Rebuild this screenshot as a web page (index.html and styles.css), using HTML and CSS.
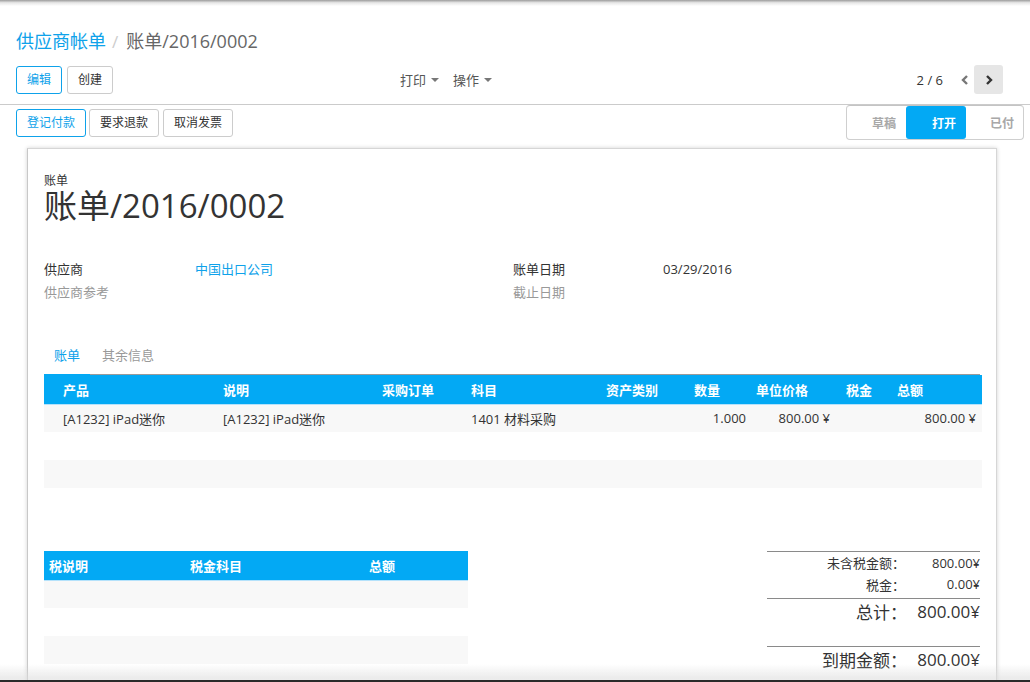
FILE: index.html
```html
<!DOCTYPE html>
<html lang="zh-CN">
<head>
<meta charset="utf-8">
<title>账单/2016/0002</title>
<link rel="stylesheet" href="styles.css">
</head>
<body>
<div class="app">
  <div class="top-shade"></div>
  <div class="control-panel">
    <ol class="breadcrumb">
      <li class="crumb-link">供应商帐单</li>
      <li class="crumb-sep">/</li>
      <li class="crumb-active">账单/2016/0002</li>
    </ol>
    <div class="cp-row">
      <div class="cp-buttons">
        <button class="btn btn-primary">编辑</button>
        <button class="btn">创建</button>
      </div>
      <div class="cp-sidebar">
        <span class="dd">打印<span class="caret"></span></span>
        <span class="dd">操作<span class="caret"></span></span>
      </div>
      <div class="cp-pager">
        <span class="pager-value">2 / 6</span>
        <button class="pager-btn pager-prev"><svg width="10" height="12" viewBox="0 0 10 12"><path d="M7 2 L3 6 L7 10" fill="none" stroke="#777" stroke-width="2.4"/></svg></button>
        <button class="pager-btn pager-next"><svg width="10" height="12" viewBox="0 0 10 12"><path d="M3 2 L7 6 L3 10" fill="none" stroke="#333" stroke-width="2.4"/></svg></button>
      </div>
    </div>
  </div>

  <div class="form-header">
    <div class="header-buttons">
      <button class="btn btn-primary">登记付款</button>
      <button class="btn">要求退款</button>
      <button class="btn">取消发票</button>
    </div>
    <div class="statusbar">
      <span class="status status-first">草稿</span>
      <span class="status status-current">打开</span>
      <span class="status status-last">已付</span>
    </div>
  </div>

  <div class="sheet">
    <div class="title-label">账单</div>
    <h1 class="title">账单/2016/0002</h1>

    <div class="fields">
      <div class="f-label">供应商</div>
      <div class="f-value f-link">中国出口公司</div>
      <div class="f-label">账单日期</div>
      <div class="f-value">03/29/2016</div>
      <div class="f-label f-empty">供应商参考</div>
      <div class="f-value"></div>
      <div class="f-label f-empty">截止日期</div>
      <div class="f-value"></div>
    </div>

    <ul class="tabs">
      <li class="tab tab-active">账单</li>
      <li class="tab">其余信息</li>
    </ul>

    <table class="lines">
      <colgroup>
        <col class="c1"><col class="c2"><col class="c3"><col class="c4"><col class="c5"><col class="c6"><col class="c7"><col class="c8"><col class="c9">
      </colgroup>
      <thead>
        <tr>
          <th class="first">产品</th><th>说明</th><th>采购订单</th><th>科目</th><th>资产类别</th><th>数量</th><th>单位价格</th><th>税金</th><th>总额</th>
        </tr>
      </thead>
      <tbody>
        <tr class="odd">
          <td class="first">[A1232] iPad迷你</td><td>[A1232] iPad迷你</td><td></td><td>1401 材料采购</td><td></td>
          <td class="num n-qty">1.000</td><td class="num n-price">800.00 ¥</td><td></td><td class="num n-total">800.00 ¥</td>
        </tr>
        <tr class="even"><td colspan="9"></td></tr>
        <tr class="odd"><td colspan="9"></td></tr>
      </tbody>
    </table>

    <div class="bottom">
      <table class="taxes">
        <colgroup><col class="t1"><col class="t2"><col class="t3"></colgroup>
        <thead>
          <tr><th>税说明</th><th>税金科目</th><th>总额</th></tr>
        </thead>
        <tbody>
          <tr class="odd"><td colspan="3"></td></tr>
          <tr class="even"><td colspan="3"></td></tr>
          <tr class="odd"><td colspan="3"></td></tr>
        </tbody>
      </table>

      <div class="totals">
        <div class="tot-row tot-small tot-first"><span class="tot-label">未含税金额：</span><span class="tot-value">800.00¥</span></div>
        <div class="tot-row tot-small"><span class="tot-label">税金：</span><span class="tot-value">0.00¥</span></div>
        <div class="tot-row tot-big tot-sep"><span class="tot-label">总计：</span><span class="tot-value">800.00¥</span></div>
        <div class="tot-gap"></div>
        <div class="tot-row tot-big tot-sep tot-due"><span class="tot-label">到期金额：</span><span class="tot-value">800.00¥</span></div>
      </div>
    </div>
  </div>
</div>
<div class="window-bottom"></div>
</body>
</html>
```

FILE: styles.css
```css
* { box-sizing: border-box; }

html, body {
  margin: 0;
  padding: 0;
  height: 100%;
  overflow: hidden;
  background: #fff;
}

body {
  font-family: "Open Sans", "Noto Sans CJK SC", sans-serif;
  font-size: 13px;
  color: #333;
}

.app {
  width: 1030px;
}

.top-shade {
  height: 6px;
  background: linear-gradient(#9c9c9c, #e6e6e6 45%, #fff);
}

/* control panel */
.control-panel {
  padding: 23px 27px 11px 16px;
  border-bottom: 1px solid #cbcbcb;
}

.breadcrumb {
  list-style: none;
  margin: 0;
  padding: 0;
  display: flex;
  align-items: baseline;
  font-size: 18px;
  line-height: 24px;
}

.crumb-link { color: #0ea2ea; }
.crumb-sep { color: #ccc; padding: 0 8px 0 6px; font-size: 17px; }
.crumb-active { color: #666; }

.cp-row {
  margin-top: 11px;
  display: grid;
  grid-template-columns: 384px 1fr auto;
  align-items: center;
  height: 28px;
}

.cp-buttons { display: flex; gap: 5px; }

.btn {
  font-family: inherit;
  font-size: 12px;
  height: 28px;
  padding: 0 10px;
  background: #fff;
  color: #333;
  border: 1px solid #ccc;
  border-radius: 3px;
  line-height: 26px;
}

.btn-primary {
  border-color: #0ea2ea;
  color: #0ea2ea;
}

.cp-sidebar {
  display: flex;
  gap: 14px;
  color: #555;
  font-size: 13px;
}

.dd { display: inline-flex; align-items: center; }

.caret {
  display: inline-block;
  width: 0;
  height: 0;
  margin-left: 5px;
  border-left: 4px solid transparent;
  border-right: 4px solid transparent;
  border-top: 4px solid #777;
}

.cp-pager {
  display: flex;
  align-items: center;
}

.pager-value {
  font-size: 13px;
  color: #333;
  margin-right: 12px;
}

.pager-btn {
  width: 29px;
  height: 29px;
  border: none;
  background: transparent;
  padding: 0;
  display: flex;
  align-items: center;
  justify-content: center;
  border-radius: 3px;
}

.pager-prev { width: 19px; }

.pager-next { background: #e6e6e6; }

/* form header */
.form-header {
  display: flex;
  justify-content: space-between;
  align-items: flex-start;
  padding: 0 6px 0 16px;
}

.header-buttons {
  display: flex;
  gap: 3px;
  margin-top: 4px;
}

.header-buttons .btn:last-child { margin-left: 1px; }

.statusbar {
  display: flex;
  height: 35px;
  border: 1px solid #cfcfcf;
  border-top-color: #c4c4c4;
  border-radius: 4px;
}

.status {
  display: flex;
  align-items: center;
  justify-content: flex-end;
  padding-right: 10px;
  font-size: 12px;
  font-weight: bold;
  color: #a8a8a8;
}

.status-first { width: 59px; }
.status-current { width: 60px; }
.status-last { width: 57px; padding-right: 9px; }

.status-current {
  background: #03a9f4;
  color: #fff;
  border-radius: 3px;
}

/* sheet */
.sheet {
  margin: 8px 33px 0 27px;
  min-height: 700px;
  border: 1px solid #d6d6d6;
  border-left-color: #c8c8c8;
  box-shadow: 0 0 4px rgba(0, 0, 0, 0.18);
  padding: 25px 16px 0 16px;
  background: #fff;
}

.title-label {
  font-size: 12px;
  line-height: 14px;
  color: #333;
}

.title {
  margin: 0;
  font-size: 33px;
  line-height: 36px;
  font-weight: normal;
  color: #333;
}

.fields {
  margin-top: 33px;
  display: grid;
  grid-template-columns: 151px 318px 150px 1fr;
  grid-auto-rows: 23px;
  align-items: center;
  font-size: 13px;
}

.f-label { color: #333; }
.f-empty { color: #999; }
.f-link { color: #0ea2ea; }

.tabs {
  list-style: none;
  margin: 35px 0 0 0;
  padding: 0;
  display: flex;
  border-bottom: 1px solid #9a9a9a;
}

.tab {
  padding: 7px 10px 9px 10px;
  margin-right: 2px;
  line-height: 20px;
  font-size: 13px;
  color: #999;
}

.tab-active {
  color: #0ea2ea;
  border-bottom: 1px solid #03a9f4;
  margin-bottom: -1px;
}

/* tables */
table {
  border-collapse: collapse;
  table-layout: fixed;
}

.lines { width: 938px; }

.c1 { width: 179px; }
.c2 { width: 159px; }
.c3 { width: 89px; }
.c4 { width: 135px; }
.c5 { width: 88px; }
.c6 { width: 62px; }
.c7 { width: 90px; }
.c8 { width: 51px; }
.c9 { width: 85px; }

th {
  background: #03a9f4;
  color: #fff;
  font-weight: bold;
  font-size: 13px;
  text-align: left;
  height: 29px;
  padding: 0;
  border-bottom: 1px solid #b5e2fb;
}

.lines th.first, .lines td.first { padding-left: 19px; }

td {
  height: 28px;
  padding: 0;
  font-size: 13px;
  color: #333;
  white-space: nowrap;
}

tr.odd td { background: #f8f8f8; }
tr.even td { background: #fff; }

td.num { text-align: right; }
.n-qty { padding-right: 10px; }
.n-price { padding-right: 16px; }
.n-total { padding-right: 6px; }

.bottom {
  margin-top: 63px;
  display: flex;
  justify-content: space-between;
  align-items: flex-start;
}

.taxes { width: 424px; }
.t1 { width: 146px; }
.t2 { width: 179px; }
.t3 { width: 99px; }

.taxes th:first-child { padding-left: 5px; }

/* totals */
.totals {
  width: 213px;
}

.tot-row {
  display: flex;
  justify-content: flex-end;
  align-items: center;
}

.tot-first { border-top: 1px solid #8a8a8a; }

.tot-small {
  height: 22px;
  font-size: 13px;
}

.tot-small .tot-value { width: 75px; }

.tot-big {
  height: 25px;
  font-size: 17px;
}

.tot-big .tot-value { width: 73px; }

.tot-sep { border-top: 1px solid #8a8a8a; margin-top: 3px; }

.tot-label { text-align: right; }

.tot-value { text-align: right; }

.tot-gap { height: 23px; }

.tot-due { height: 26px; margin-top: 0; }

/* window edge */
.window-bottom {
  position: fixed;
  left: 0;
  right: 0;
  bottom: 0;
  height: 18px;
  background: linear-gradient(rgba(230, 230, 230, 0), rgba(220, 220, 220, 0.55) 85%);
  border-bottom: 2px solid #2a2a2a;
  pointer-events: none;
}
```
